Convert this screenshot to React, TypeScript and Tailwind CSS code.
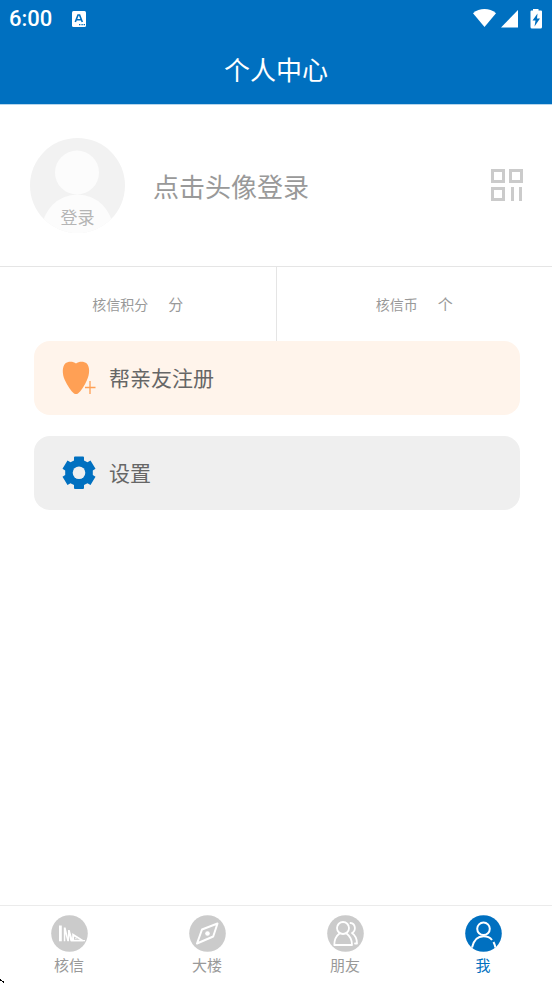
import { useState } from "react";
import type { ReactNode } from "react";

const tabs = [
  { key: "hexin", label: "核信", icon: <HexinIcon /> },
  { key: "building", label: "大楼", icon: <CompassIcon /> },
  { key: "friends", label: "朋友", icon: <FriendsIcon /> },
  { key: "me", label: "我", icon: <MeIcon /> },
];

function HexinIcon() {
  return (
    <g fill="#fff">
      <path d="M8 10.500h2.800v15.800H8z" />
      <path d="M12.800 12.500h1.800L17 22.500V15h1.700l2.500 8.500V18l11 7v1.300H19.500L18 20.500v5.800h-1.700l-2-7.500v7.500h-1.500z" />
      <path d="M23 21.500v3.300h6z" fill="#cbcbcb" />
      <path d="M24.300 22.700v1.300h2z" />
      <path d="M20 25h14v1.300H20z" />
    </g>
  );
}

function CompassIcon() {
  return (
    <g fill="none" stroke="#fff" strokeWidth="2" strokeLinejoin="round">
      <path d="M28.500 8.500 L24.200 21.500 L8 28.500 L13 14.500 Z" />
      <circle cx="18.500" cy="18.500" r="2.300" fill="#fff" stroke="none" />
    </g>
  );
}

function FriendsIcon() {
  return (
    <g fill="none" stroke="#fff" strokeWidth="1.800" strokeLinecap="round" strokeLinejoin="round">
      <circle cx="16" cy="13" r="6" />
      <path d="M12.500 18.500 C9 21 7.300 25 7.300 30 H25 C25 25 23 21 19.500 18.500" />
      <path d="M23.500 8 C28.500 8.500 29.500 15.500 25 18 C28.500 20.500 30 24 30 28.500 H28" />
    </g>
  );
}

function MeIcon() {
  return (
    <g fill="none" stroke="#fff" strokeWidth="2">
      <circle cx="18.500" cy="13.800" r="6.300" />
      <path d="M7 32.500 C9 24 13.500 21.300 18.500 21.300 C22 21.300 25 22.500 27 25" />
      <path d="M28.500 27 C29.300 28.500 30 30 30.400 32.500" />
    </g>
  );
}

function StatusBar() {
  return (
    <div className="flex h-[38px] items-center justify-between px-[9px]">
      <div className="flex items-center gap-5">
        <span className="font-[Roboto,sans-serif] text-[22px] leading-6 font-medium">6:00</span>
        <svg width="16" height="16" viewBox="1 0 16 16">
          <rect x="1" width="14" height="16" rx="1.5" fill="#fff" />
          <path d="M4.300 11 L7 4h1.600l2.700 7M5.600 8.800h4.500" fill="none" stroke="#0070c0" strokeWidth="1.600" />
          <path d="M8 13h1.400v1.300H8zM10.400 13h1.400v1.300h-1.400zM12.600 13H14v1.300h-1.400z" fill="#0070c0" />
        </svg>
      </div>
      <svg width="70" height="20" viewBox="0 0 70 20" fill="#fff">
        <path d="M0 4.300 C6.500-1.300 16.500-1.300 23 4.300 L11.500 18 Z" />
        <path d="M45 1 V18.500 H28 Z" />
        <path d="M60 0h5.500v1.500H68a1 1 0 0 1 1 1V18a1.500 1.500 0 0 1-1.500 1.500h-8.500A1.500 1.500 0 0 1 57.500 18V2.500a1 1 0 0 1 1-1h1.500z" />
        <path d="M64.500 4.500 L59.500 11.500h3l-1 6 5.500-8h-3z" fill="#0070c0" />
      </svg>
    </div>
  );
}

function Stat({ label, unit }: { label: string; unit: string }) {
  return (
    <div className="flex flex-1 items-center justify-center gap-5 text-[#999]">
      <span className="text-[14px]">{label}</span>
      <span className="text-[15px]">{unit}</span>
    </div>
  );
}

function MenuButton({ icon, label, className }: { icon: ReactNode; label: string; className: string }) {
  return (
    <button
      type="button"
      className={`flex h-[74px] w-full cursor-pointer items-center gap-3 rounded-2xl px-7 text-[21px] text-[#666] ${className}`}
    >
      {icon}
      <span>{label}</span>
    </button>
  );
}

const App = () => {
  const [active, setActive] = useState("me");

  return (
    <div className="relative flex min-h-screen flex-col bg-white font-['Noto_Sans_CJK_SC',sans-serif]">
      <header className="border-b border-[#b5d5ec] bg-[#0070c0] pb-1.5 text-white">
        <StatusBar />
        <h1 className="flex h-[60px] items-center justify-center text-[26px]">个人中心</h1>
      </header>

      <main className="flex-1">
        {/* Profile */}
        <section className="flex h-[161px] items-center pl-[30px] pr-7">
          <button type="button" className="relative cursor-pointer">
            <svg width="95" height="95" viewBox="0 0 95 95">
              <clipPath id="avatar">
                <circle cx="47.500" cy="47.500" r="47.500" />
              </clipPath>
              <g clipPath="url(#avatar)">
                <rect width="95" height="95" fill="#f2f2f2" />
                <circle cx="47" cy="34.500" r="22" fill="#fcfcfc" />
                <circle cx="47.500" cy="92" r="35.500" fill="#fcfcfc" />
              </g>
            </svg>
            <span className="absolute inset-x-0 bottom-1 text-center text-[17px] text-[#b5b5b5]">登录</span>
          </button>
          <p className="ml-7 flex-1 text-[26px] text-[#999]">点击头像登录</p>
          <button type="button" aria-label="二维码" className="cursor-pointer">
            <svg width="34" height="34" viewBox="0 1 34 34" fill="none" stroke="#cbcbcb" strokeWidth="3">
              <path d="M2.500 2.500h11v11h-11zM20.500 2.500h11v11h-11zM2.500 20.500h11v11h-11z" />
              <path d="M22.500 19v14M30.500 19v14" />
            </svg>
          </button>
        </section>

        {/* Points */}
        <section className="flex h-[75px] divide-x divide-[#e5e5e5] border-t border-[#e5e5e5]">
          <Stat label="核信积分" unit="分" />
          <Stat label="核信币" unit="个" />
        </section>

        {/* Menu */}
        <section className="flex flex-col gap-[21px] pl-[34px] pr-8">
          <MenuButton
            label="帮亲友注册"
            className="bg-[#fff4eb]"
            icon={
              <svg width="35" height="34" viewBox="0 0 35 34">
                <path
                  d="M14 2.500 C11 0 6 0 3.200 2.500 C0 6 0.200 13 2.800 19 C5.500 25 9 30 12 32.500 Q14 33.600 16 32.500 C19 30 22.500 25 25 19 C27.800 13 28 6 24.800 2.500 C22 0 17 0 14 2.500 Z"
                  fill="#ffa055"
                />
                <path d="M28 20v13M23 26.500h10.500" stroke="#fff4eb" strokeWidth="4" />
                <path d="M28 20v13M23 26.500h10.500" stroke="#ffa055" strokeWidth="1.300" />
              </svg>
            }
          />
          <MenuButton
            label="设置"
            className="bg-[#efefef]"
            icon={
              <svg width="35" height="34" viewBox="0 0 35 34">
                <path
                  d="M12 1.500 Q12 0.500 13 0.500 H21 Q22 0.500 22 1.500 V4.500 L25.500 6.300 L28.500 4.600 L33.500 12.800 L30.800 14.500 V19 L33.500 20.700 L28.500 29 L25.500 27.200 L22 29 V32 Q22 33 21 33 H13 Q12 33 12 32 V29 L8.500 27.200 L5.500 29 L0.500 20.700 L3.200 19 V14.500 L0.500 12.800 L5.500 4.600 L8.500 6.300 L12 4.500 Z"
                  fill="#0070c0"
                />
                <circle cx="17" cy="16.800" r="6.300" fill="#efefef" />
              </svg>
            }
          />
        </section>
      </main>

      <nav className="flex h-[78px] border-t border-[#ebebeb] pt-[9px]">
        {tabs.map((tab) => (
          <button
            key={tab.key}
            type="button"
            onClick={() => setActive(tab.key)}
            className={`flex flex-1 cursor-pointer flex-col items-center gap-0.5 text-[15px] leading-[22px] ${
              active === tab.key ? "text-[#0070c0]" : "text-[#999]"
            }`}
          >
            <svg width="37" height="37" viewBox="0 0 37 37">
              <circle cx="18.500" cy="18.500" r="18.300" fill={active === tab.key ? "#0070c0" : "#cbcbcb"} />
              {tab.icon}
            </svg>
            <span>{tab.label}</span>
          </button>
        ))}
      </nav>

      <svg className="absolute bottom-0 left-0" width="4" height="4" viewBox="0 0 4 4" shapeRendering="crispEdges">
        <path d="M0 0h1v1H0zM1 1h1v1H1zM2 2h1v1H2zM3 3h1v1H3zM0 1h1v1H0zM3 2h1v1H3z" fill="#000" />
      </svg>
    </div>
  );
};

export default App;
